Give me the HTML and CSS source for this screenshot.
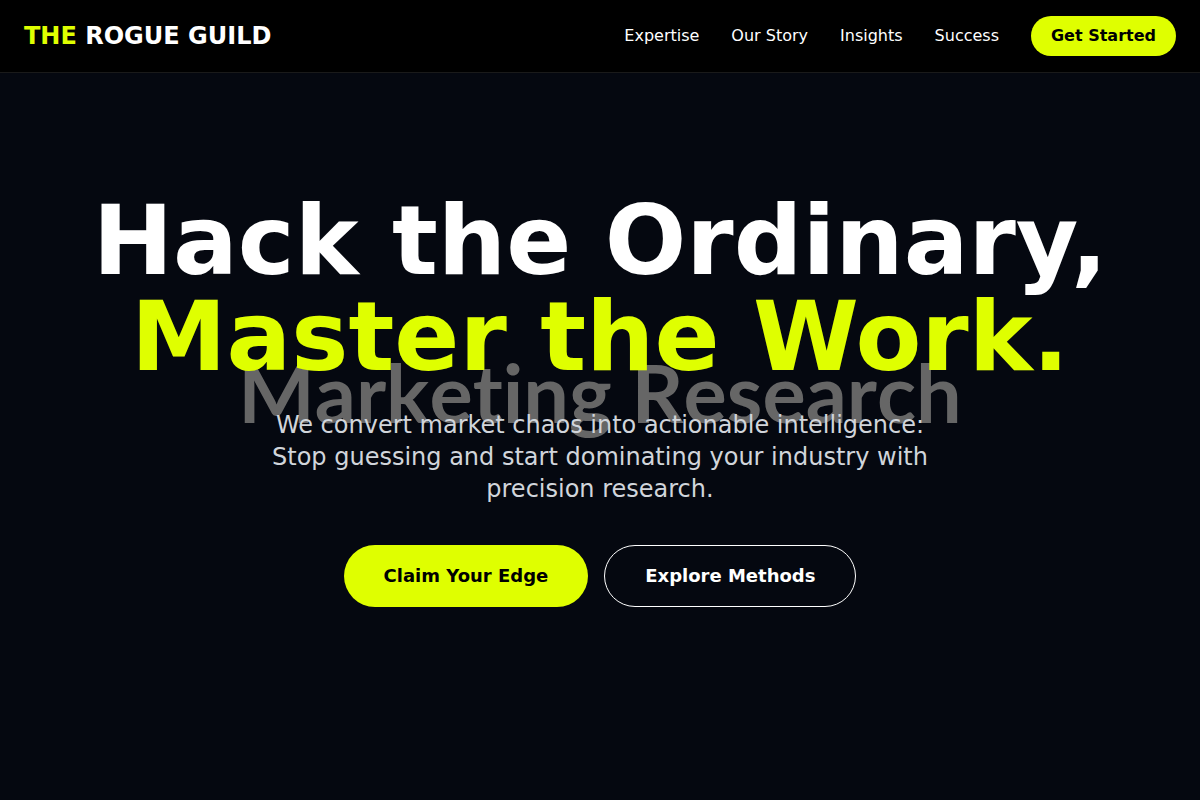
FILE: index.html
```html
<!DOCTYPE html>
<html lang="en">
<head>
    <meta charset="UTF-8">
    <meta name="viewport" content="width=device-width, initial-scale=1.0">
    <title>The Rogue Guild</title>

    <link rel="stylesheet" href="styles.css">
</head>
<body>
    <!-- Fixed navigation -->
    <header class="site-header">
        <a class="logo" href="#"><span class="accent">THE</span> ROGUE GUILD</a>
        <nav class="main-nav">
            <a href="#expertise">Expertise</a>
            <a href="#story">Our Story</a>
            <a href="#insights">Insights</a>
            <a href="#success">Success</a>
            <button type="button" class="btn btn-small">Get Started</button>
        </nav>
    </header>

    <!-- Hero -->
    <main class="hero">
        <div class="hero-backdrop" aria-hidden="true">Marketing Research</div>
        <div class="hero-content">
            <h1>Hack the Ordinary,<br><span class="accent">Master the Work.</span></h1>
            <p>We convert market chaos into actionable intelligence: Stop guessing and start dominating your industry with precision research.</p>
            <div class="hero-actions">
                <button type="button" class="btn btn-large">Claim Your Edge</button>
                <button type="button" class="btn btn-large btn-outline">Explore Methods</button>
            </div>
        </div>
    </main>
</body>
</html>
```
FILE: styles.css
```css
* {
    box-sizing: border-box;
}

body {
    margin: 0;
    font-family: "DejaVu Sans", sans-serif;
    font-size: 16px;
    line-height: 24px;
    background-color: #050810;
    color: white;
}

a {
    color: inherit;
    text-decoration: none;
}

.accent {
    color: #dfff00;
}

/* Navigation bar, stays above the hero */
.site-header {
    position: fixed;
    top: 0;
    left: 0;
    right: 0;
    z-index: 10;
    display: flex;
    align-items: center;
    justify-content: space-between;
    padding: 16px 24px;
    background-color: black;
    border-bottom: 1px solid #1a1a1a;
}

.logo {
    font-size: 24px;
    line-height: 32px;
    font-weight: bold;
}

.main-nav {
    display: flex;
    align-items: center;
    gap: 32px;
}

/* Buttons */
.btn {
    border: none;
    border-radius: 9999px;
    background-color: #dfff00;
    color: black;
    font-family: inherit;
    font-weight: bold;
    cursor: pointer;
}

.btn-small {
    padding: 8px 20px;
    font-size: 16px;
    line-height: 24px;
}

.btn-large {
    padding: 16px 40px;
    font-size: 18px;
    line-height: 28px;
}

.btn-outline {
    border: 1px solid white;
    background-color: transparent;
    color: white;
}

/* Hero section */
.hero {
    position: relative;
    display: flex;
    align-items: center;
    justify-content: center;
    min-height: 100vh;
    padding: 0 24px;
    overflow: hidden;
}

/* Large faded words behind the headline */
.hero-backdrop {
    position: absolute;
    inset: 0;
    display: flex;
    align-items: center;
    justify-content: center;
    padding-bottom: 16px;
    font-family: Lato, sans-serif;
    font-size: 81px;
    font-weight: bold;
    font-variant-ligatures: none;
    font-kerning: none;
    color: #666;
    white-space: nowrap;
}

.hero-content {
    position: relative;
    text-align: center;
}

h1 {
    margin: 0 0 24px;
    font-size: 96px;
    line-height: 96px;
    font-weight: bold;
}

.hero-content p {
    max-width: 672px;
    margin: 0 auto 40px;
    font-size: 24px;
    line-height: 32px;
    color: #d1d5db;
}

.hero-actions {
    display: flex;
    justify-content: center;
    gap: 16px;
}
```
